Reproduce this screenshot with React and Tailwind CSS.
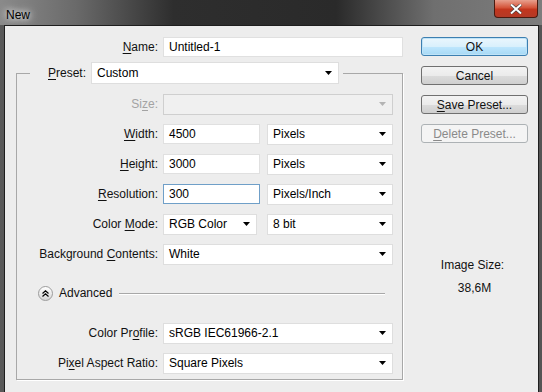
import React from "react";

const font = { fontFamily: '"Liberation Sans", Arial, sans-serif' };

function Arrow({ muted }) {
  return (
    <svg width="7" height="4" viewBox="0 0 7 4" className="shrink-0">
      <path d="M0 0h7L3.5 4z" fill={muted ? "#b4b4b4" : "#000"} />
    </svg>
  );
}

function Select({ value, className = "", disabled }) {
  return (
    <div
      className={`flex items-center justify-between h-[21px] pl-[5px] pr-[6px] border ${
        disabled ? "bg-[#f0f0f0] border-[#cfcfcf]" : "bg-white border-[#dedede]"
      } ${className}`}
    >
      <span className="leading-none">{value}</span>
      <Arrow muted={disabled} />
    </div>
  );
}

function Input({ value, className = "", focused }) {
  return (
    <div
      className={`flex items-center h-[20px] pl-[5px] bg-white border ${
        focused ? "border-[#6f9fc8]" : "border-[#e0e0e0]"
      } ${className}`}
    >
      <span className="leading-none">{value}</span>
    </div>
  );
}

function Label({ children, muted }) {
  return (
    <div className={`w-[141px] text-right ${muted ? "text-[#a3a3a3]" : "text-[#111]"}`}>
      {children}
    </div>
  );
}

function U({ children }) {
  return <span className="underline underline-offset-[2px]">{children}</span>;
}

function Row({ children }) {
  return <div className="flex items-center h-[20px] gap-[5px]">{children}</div>;
}

function Button({ children, primary, disabled }) {
  let cls =
    "border-[#707070] bg-[linear-gradient(#f3f3f3_0%,#ebebeb_50%,#dcdcdc_51%,#cfcfcf_100%)] text-[#111]";
  if (primary)
    cls =
      "border-[#3c7fb1] bg-[linear-gradient(#eaf6fd_0%,#d9f0fc_50%,#bee6fd_51%,#a7d9f5_100%)] text-[#111] shadow-[inset_0_0_0_1px_#bfe3f7]";
  if (disabled) cls = "border-[#adb2b5] bg-[#f4f4f4] text-[#8a8a8a]";
  return (
    <div className={`h-[19px] flex items-center justify-center rounded-[3px] border ${cls}`}>
      {children}
    </div>
  );
}

export default function App() {
  return (
    <div
      style={font}
      className="w-[542px] h-[392px] overflow-hidden flex flex-col text-[12px] bg-[linear-gradient(90deg,#5a5a5a_0%,#3a3a3a_20%,#2b2b2b_40%,#2b2b2b_65%,#4a4a4a_85%,#555_100%)]"
    >
      {/* title bar */}
      <div className="h-[25px] shrink-0 flex items-start justify-between bg-[linear-gradient(90deg,#8a8a8a_0%,#6a6a6a_14%,#2e2e2e_32%,#2a2a2a_62%,#6f6f6f_80%,#7d7d7d_100%)]">
        <span className="mt-[6px] ml-[6px] text-[12px] text-black [text-shadow:0_0_6px_#fff,0_0_10px_#ddd]">
          New
        </span>
        <div className="mr-[4px] w-[44px] h-[18px] rounded-b-[4px] border border-[#4a1a10] border-t-0 bg-[linear-gradient(#e8a08e_0%,#d4543a_45%,#c2361e_55%,#b43a26_100%)] flex items-center justify-center">
          <svg width="12" height="10" viewBox="0 0 12 10">
            <path d="M1 0.5L11 9.5M11 0.5L1 9.5" stroke="#3a3a3a" strokeWidth="3.2" />
            <path d="M1 0.5L11 9.5M11 0.5L1 9.5" stroke="#fff" strokeWidth="2" />
          </svg>
        </div>
      </div>

      {/* client area */}
      <div className="flex-1 ml-[4px] mr-[3px] border border-b-0 border-[#1e1e1e] bg-[#ededed] flex">
        {/* left side */}
        <div className="pl-[11px] pt-[11px]">
          <div className="flex items-center h-[19px] gap-[5px]">
            <div className="w-[142px] text-right text-[#111]">
              <U>N</U>ame:
            </div>
            <Input value="Untitled-1" className="w-[240px] h-[19px]" />
          </div>

          <fieldset className="mt-[6px] w-[387px] border border-[#a8a8a8] pl-[13px] pb-[6px] pr-[9px] shadow-[1px_1px_0_#fff]">
            <legend className="px-[4px]">
              <div className="flex items-center gap-[5px] pl-[14px]">
                <span className="text-[#111]">
                  <U>P</U>reset:
                </span>
                <Select value="Custom" className="w-[248px] h-[22px]" />
              </div>
            </legend>

            <div className="-ml-[13px] mt-[10px] flex flex-col gap-[10px]">
              <Row>
                <Label muted>Si<U>z</U>e:</Label>
                <Select value="" disabled className="w-[230px]" />
              </Row>
              <Row>
                <Label>
                  <U>W</U>idth:
                </Label>
                <Input value="4500" className="w-[97px]" />
                <Select value="Pixels" className="ml-[2px] w-[126px]" />
              </Row>
              <Row>
                <Label>
                  <U>H</U>eight:
                </Label>
                <Input value="3000" className="w-[97px]" />
                <Select value="Pixels" className="ml-[2px] w-[126px]" />
              </Row>
              <Row>
                <Label>
                  <U>R</U>esolution:
                </Label>
                <Input value="300" focused className="w-[97px]" />
                <Select value="Pixels/Inch" className="ml-[2px] w-[126px]" />
              </Row>
              <Row>
                <Label>
                  Color <U>M</U>ode:
                </Label>
                <Select value="RGB Color" className="w-[94px]" />
                <Select value="8 bit" className="ml-[5px] w-[126px]" />
              </Row>
              <Row>
                <Label>
                  Background <U>C</U>ontents:
                </Label>
                <Select value="White" className="w-[230px]" />
              </Row>
            </div>

            <div className="mt-[21px] h-[16px] flex items-center gap-[6px] pl-[8px]">
              <div className="w-[15px] h-[15px] rounded-full border border-[#9c9c9c] bg-[linear-gradient(#ffffff,#d6d6d6)] flex items-center justify-center">
                <svg width="7" height="7" viewBox="0 0 7 7">
                  <path d="M0.5 3.5L3.5 0.8L6.5 3.5M0.5 6.5L3.5 3.8L6.5 6.5" fill="none" stroke="#000" strokeWidth="1.2" />
                </svg>
              </div>
              <span className="text-[#111]">Advanced</span>
              <div className="flex-1 ml-[1px] mr-[8px] h-0 border-t border-[#a8a8a8] shadow-[0_1px_0_#fff]" />
            </div>

            <div className="-ml-[13px] mt-[22px] flex flex-col gap-[10px]">
              <Row>
                <Label>
                  Color Pr<U>o</U>file:
                </Label>
                <Select value="sRGB IEC61966-2.1" className="w-[230px]" />
              </Row>
              <Row>
                <Label>
                  Pi<U>x</U>el Aspect Ratio:
                </Label>
                <Select value="Square Pixels" className="w-[230px]" />
              </Row>
            </div>
          </fieldset>
        </div>

        {/* right side */}
        <div className="ml-[18px] w-[107px] pt-[11px] flex flex-col">
          <div className="flex flex-col gap-[10px]">
            <Button primary>OK</Button>
            <Button>Cancel</Button>
            <Button>
              <span>
                <U>S</U>ave Preset...
              </span>
            </Button>
            <Button disabled>
              <span>
                <U>D</U>elete Preset...
              </span>
            </Button>
          </div>
          <div className="mt-[115px] text-center text-[#111] leading-[15px]">
            <div className="pr-[4px]">Image Size:</div>
            <div className="mt-[8px]">38,6M</div>
          </div>
        </div>
      </div>
    </div>
  );
}
